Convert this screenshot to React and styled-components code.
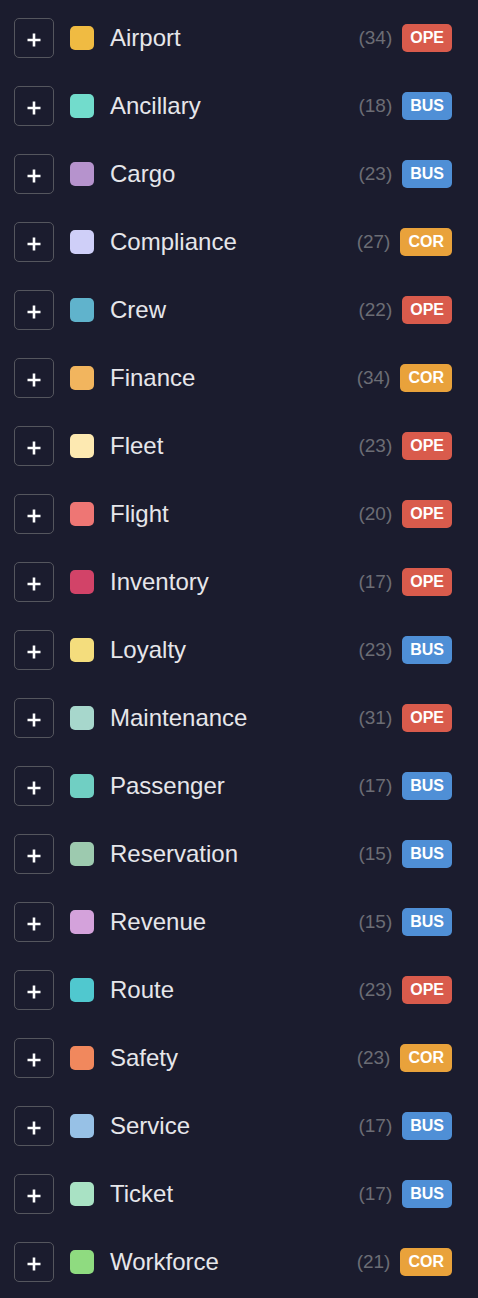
import React from 'react';
import styled, { createGlobalStyle } from 'styled-components';

const GlobalStyle = createGlobalStyle`
  html, body {
    margin: 0;
    padding: 0;
    background: #1b1c2e;
  }
  body {
    font-family: "Liberation Sans", Arial, Helvetica, sans-serif;
  }
`;

const TYPE_COLORS = {
  OPE: '#d95b4c',
  BUS: '#4f8fd6',
  COR: '#e9a23b',
};

const domains = [
  { name: 'Airport', count: 34, type: 'OPE', color: '#f0bb42' },
  { name: 'Ancillary', count: 18, type: 'BUS', color: '#72dccc' },
  { name: 'Cargo', count: 23, type: 'BUS', color: '#b693cd' },
  { name: 'Compliance', count: 27, type: 'COR', color: '#cfcff8' },
  { name: 'Crew', count: 22, type: 'OPE', color: '#60b3cc' },
  { name: 'Finance', count: 34, type: 'COR', color: '#f2b55e' },
  { name: 'Fleet', count: 23, type: 'OPE', color: '#fde9b1' },
  { name: 'Flight', count: 20, type: 'OPE', color: '#ee7674' },
  { name: 'Inventory', count: 17, type: 'OPE', color: '#d24368' },
  { name: 'Loyalty', count: 23, type: 'BUS', color: '#f4dd7d' },
  { name: 'Maintenance', count: 31, type: 'OPE', color: '#a7d7cc' },
  { name: 'Passenger', count: 17, type: 'BUS', color: '#70cfc3' },
  { name: 'Reservation', count: 15, type: 'BUS', color: '#9dcaaf' },
  { name: 'Revenue', count: 15, type: 'BUS', color: '#d4a2db' },
  { name: 'Route', count: 23, type: 'OPE', color: '#50c8cf' },
  { name: 'Safety', count: 23, type: 'COR', color: '#f1885d' },
  { name: 'Service', count: 17, type: 'BUS', color: '#97c1e6' },
  { name: 'Ticket', count: 17, type: 'BUS', color: '#a9e2c4' },
  { name: 'Workforce', count: 21, type: 'COR', color: '#8fdb80' },
];

const S = {
  List: styled.ul`
    list-style: none;
    margin: 0;
    padding: 4px 26px 0 14px;
  `,
  Row: styled.li`
    display: flex;
    align-items: center;
    height: 68px;
  `,
  AddButton: styled.button`
    box-sizing: border-box;
    width: 40px;
    height: 40px;
    flex: none;
    display: flex;
    align-items: center;
    justify-content: center;
    padding: 0;
    background: transparent;
    border: 1.5px solid #55565e;
    border-radius: 5px;
    cursor: pointer;
  `,
  Swatch: styled.span`
    width: 24px;
    height: 24px;
    flex: none;
    margin-left: 16px;
    border-radius: 5px;
    background: ${(p) => p.$color};
  `,
  Name: styled.span`
    flex: 1;
    margin-left: 16px;
    font-size: 24px;
    color: #e6e6ea;
    white-space: nowrap;
  `,
  Count: styled.span`
    font-size: 19px;
    color: #6c6d75;
    margin-right: 10px;
  `,
  Badge: styled.span`
    box-sizing: border-box;
    height: 28px;
    display: inline-flex;
    align-items: center;
    padding: 0 8px;
    border-radius: 5px;
    font-size: 16px;
    font-weight: 700;
    color: #ffffff;
    background: ${(p) => TYPE_COLORS[p.$type]};
  `,
};

const PlusIcon = () => (
  <svg width="16" height="16" viewBox="0 0 16 16" style={{ marginTop: 3 }}>
    <path d="M8 1.5v13M1.5 8h13" stroke="#ffffff" strokeWidth="2.6" />
  </svg>
);

const App = () => {
  return (
    <>
      <GlobalStyle />
      <S.List>
        {domains.map((d) => (
          <S.Row key={d.name}>
            <S.AddButton type="button" aria-label={`Add ${d.name}`}>
              <PlusIcon />
            </S.AddButton>
            <S.Swatch $color={d.color} />
            <S.Name>{d.name}</S.Name>
            <S.Count>({d.count})</S.Count>
            <S.Badge $type={d.type}>{d.type}</S.Badge>
          </S.Row>
        ))}
      </S.List>
    </>
  );
};

export default App;
